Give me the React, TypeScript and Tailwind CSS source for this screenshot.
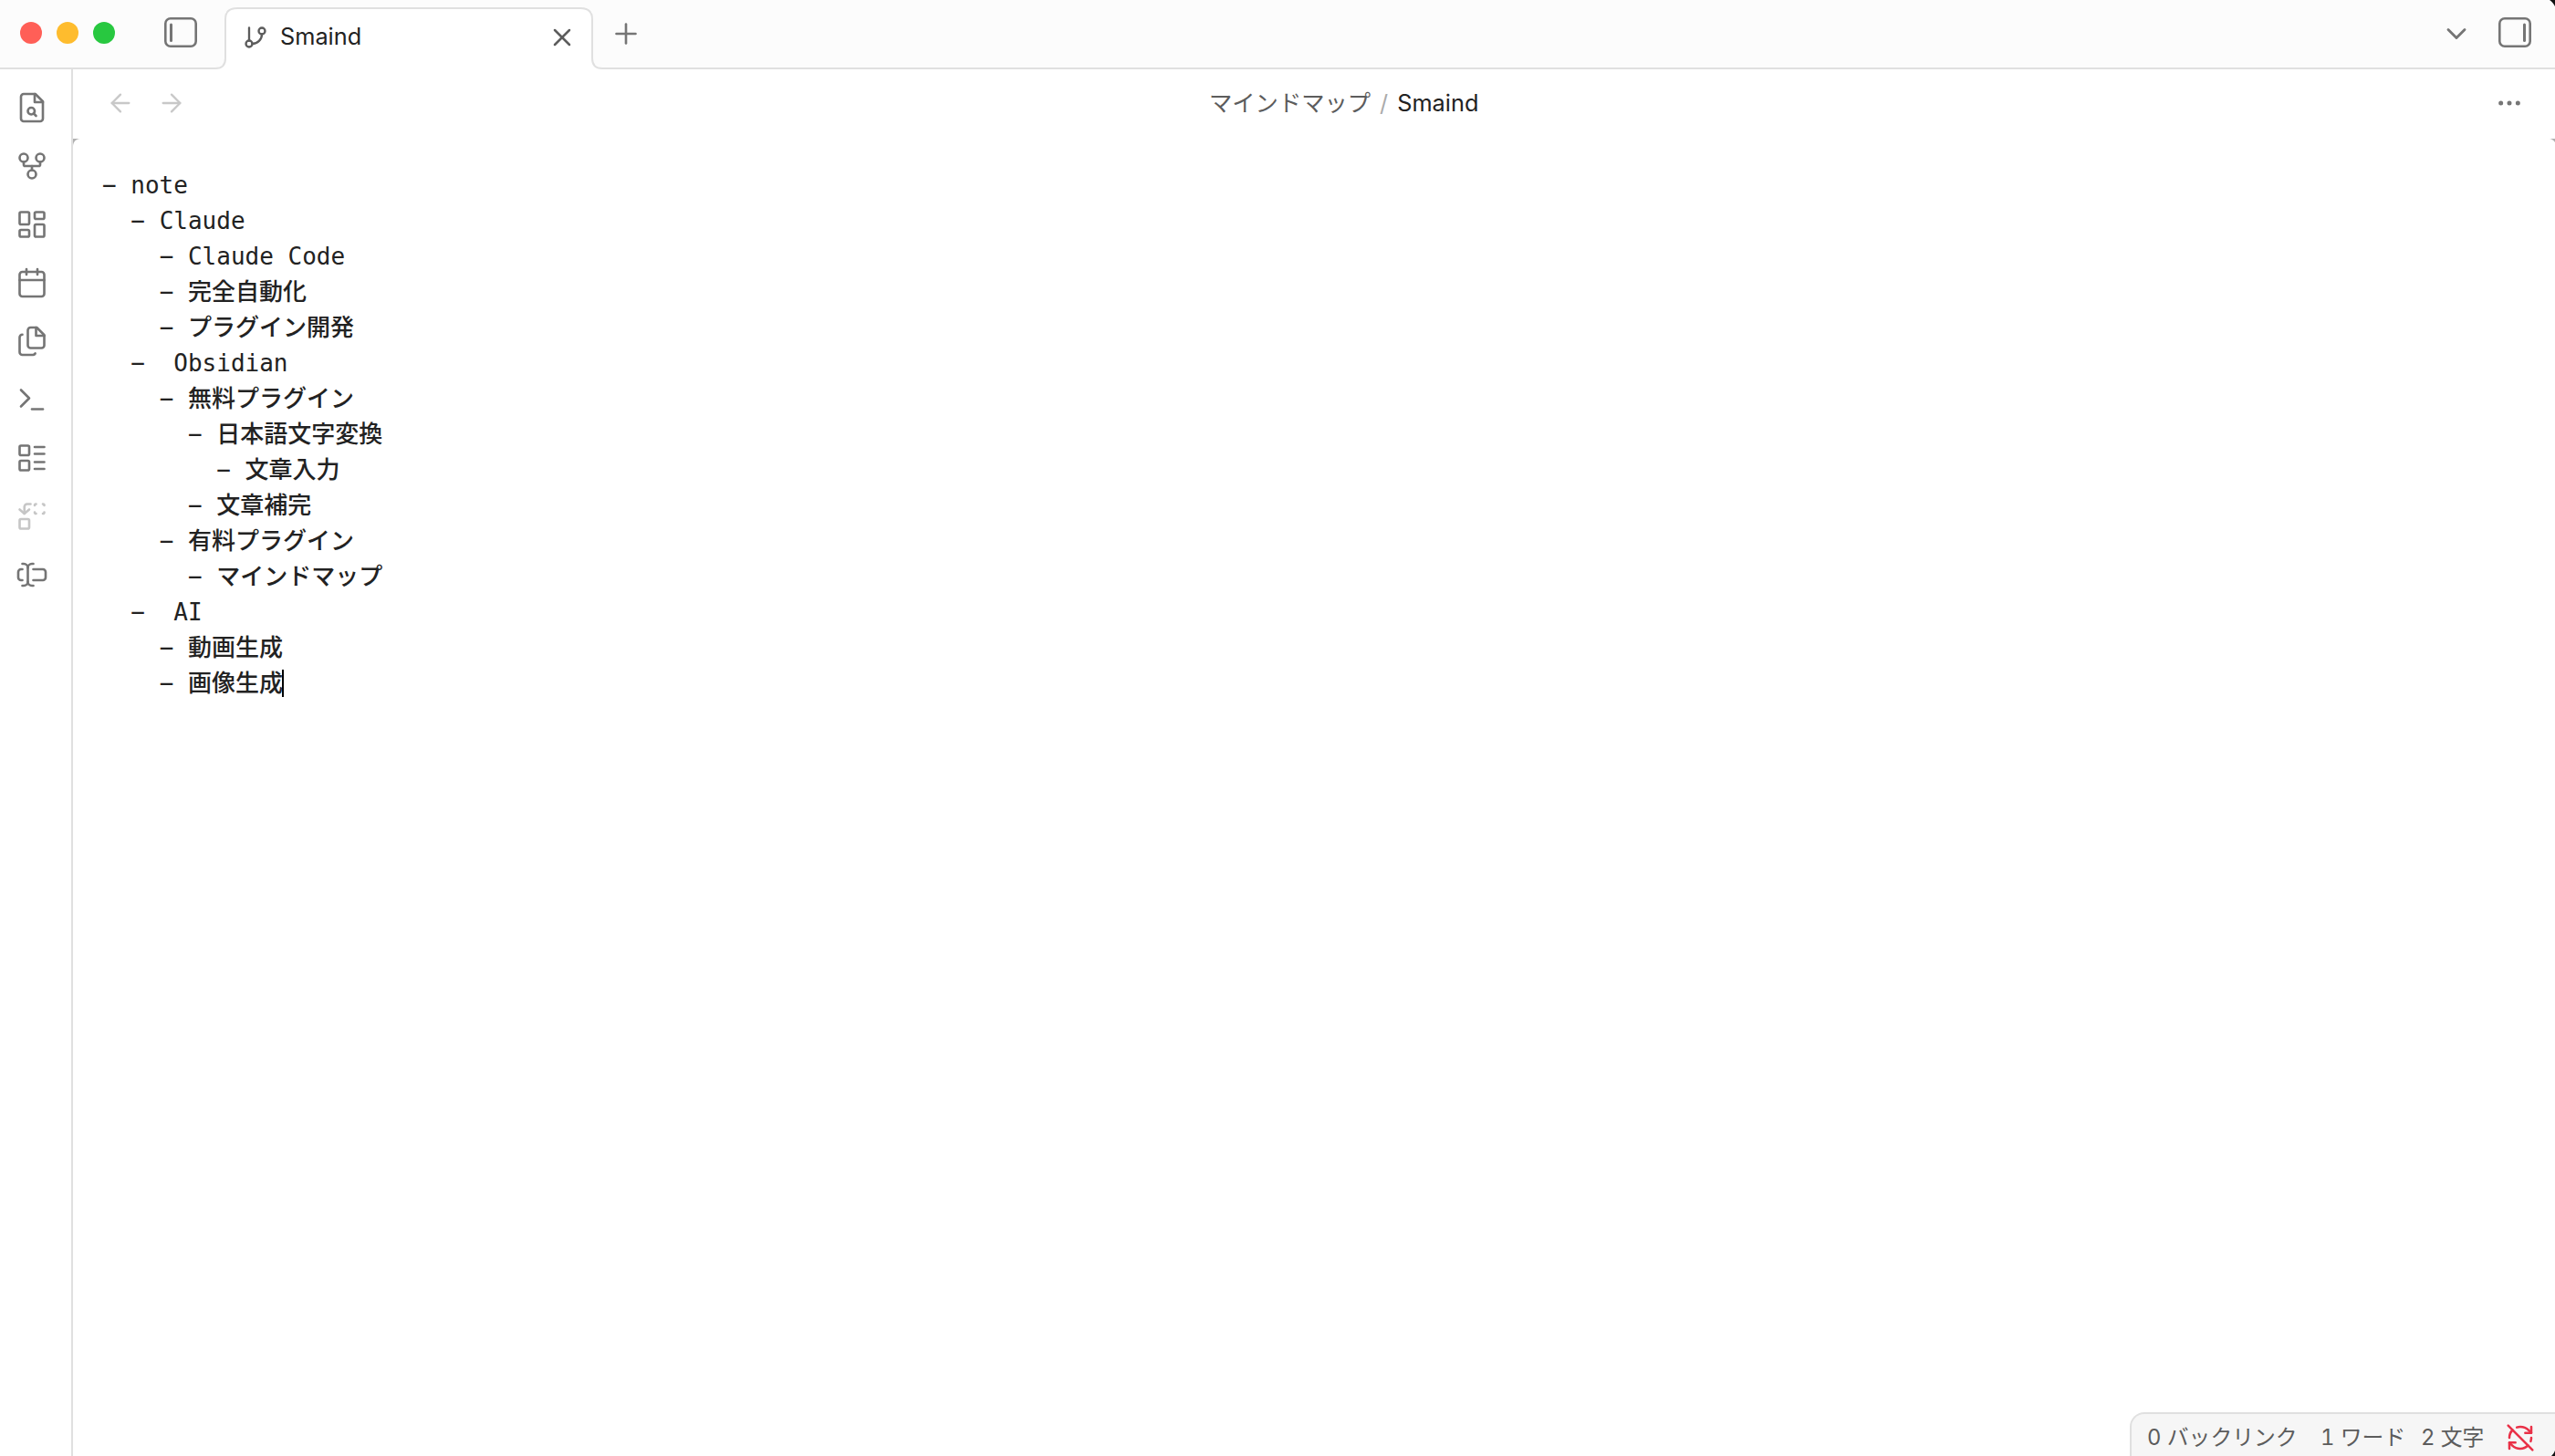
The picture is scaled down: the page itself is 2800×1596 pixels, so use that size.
import * as React from 'react'
import { ArrowLeft, ArrowRight, ChevronDown, Ellipsis, Plus, RefreshCwOff, X } from 'lucide-react'

const lines = [
  { level: 0, text: 'note' },
  { level: 1, text: 'Claude' },
  { level: 2, text: 'Claude Code' },
  { level: 2, text: '完全自動化' },
  { level: 2, text: 'プラグイン開発' },
  { level: 1, text: ' Obsidian' },
  { level: 2, text: '無料プラグイン' },
  { level: 3, text: '日本語文字変換' },
  { level: 4, text: '文章入力' },
  { level: 3, text: '文章補完' },
  { level: 2, text: '有料プラグイン' },
  { level: 3, text: 'マインドマップ' },
  { level: 1, text: ' AI' },
  { level: 2, text: '動画生成' },
  { level: 2, text: '画像生成' },
]

const ribbon = [
  {
    name: 'search',
    shapes: (
      <>
        <path d="M14.5 2H6a2 2 0 0 0-2 2v16a2 2 0 0 0 2 2h12a2 2 0 0 0 2-2V7.5L14.5 2z" />
        <path d="M14 2v6h6" />
        <circle cx="11.5" cy="14.5" r="2.5" />
        <path d="M13.25 16.25 15 18" />
      </>
    ),
  },
  {
    name: 'graph',
    shapes: (
      <>
        <circle cx="12" cy="18" r="3" />
        <circle cx="6" cy="6" r="3" />
        <circle cx="18" cy="6" r="3" />
        <path d="M18 9v2c0 .6-.4 1-1 1H7c-.6 0-1-.4-1-1V9" />
        <path d="M12 12v3" />
      </>
    ),
  },
  {
    name: 'canvas',
    shapes: (
      <>
        <rect x="3" y="3" width="7" height="9" rx="1" />
        <rect x="14" y="3" width="7" height="5" rx="1" />
        <rect x="14" y="12" width="7" height="9" rx="1" />
        <rect x="3" y="16" width="7" height="5" rx="1" />
      </>
    ),
  },
  {
    name: 'calendar',
    shapes: (
      <>
        <rect x="3" y="4" width="18" height="18" rx="2" />
        <path d="M16 2v4M8 2v4M3 10h18" />
      </>
    ),
  },
  {
    name: 'templates',
    shapes: (
      <>
        <path d="M15.5 2H11a2 2 0 0 0-2 2v11a2 2 0 0 0 2 2h8a2 2 0 0 0 2-2V7.5L15.5 2z" />
        <path d="M15 2v6h6" />
        <path d="M5 7.2a2 2 0 0 0-2 2V20a2 2 0 0 0 2 2h7.8a2 2 0 0 0 1.6-1" />
      </>
    ),
  },
  {
    name: 'terminal',
    shapes: (
      <>
        <path d="m4 17 6-6-6-6" />
        <path d="M12 19h8" />
      </>
    ),
  },
  {
    name: 'list',
    shapes: (
      <>
        <rect x="3" y="3" width="7" height="7" rx="1" />
        <rect x="3" y="14" width="7" height="7" rx="1" />
        <path d="M14 4h7M14 9h7M14 15h7M14 20h7" />
      </>
    ),
  },
  {
    name: 'replace',
    disabled: true,
    shapes: (
      <>
        <path d="M14 4c0-.5.5-1 1-1M20 3c.5 0 1 .5 1 1M21 9c0 .5-.5 1-1 1M15 10c-.5 0-1-.5-1-1" />
        <path d="m3 7 3.5 3L10 7" />
        <path d="M6.5 10V5a2 2 0 0 1 2-2H11" />
        <rect x="3" y="14" width="7" height="7" rx="1" />
      </>
    ),
  },
  {
    name: 'rename',
    shapes: (
      <>
        <path d="M5 4h1a3 3 0 0 1 3 3 3 3 0 0 1 3-3h1" />
        <path d="M13 20h-1a3 3 0 0 1-3-3 3 3 0 0 1-3 3H5" />
        <path d="M5 16H4a2 2 0 0 1-2-2v-4a2 2 0 0 1 2-2h1" />
        <path d="M13 8h7a2 2 0 0 1 2 2v4a2 2 0 0 1-2 2h-7" />
        <path d="M9 7v10" />
      </>
    ),
  },
]

function PanelIcon({ side }: { side: 'left' | 'right' }) {
  return (
    <svg width="36" height="34" viewBox="0 0 36 34" fill="none" stroke="#757575">
      <rect x="1.3" y="1.3" width="33.4" height="30.4" rx="5.5" strokeWidth="2.6" />
      <path d={side === 'left' ? 'M7.5 8v17.5' : 'M28.5 8v17.5'} strokeWidth="3" strokeLinecap="round" />
    </svg>
  )
}

function TabBar() {
  return (
    <header className="flex h-[76px] shrink-0 bg-[#fcfcfc]">
      <div className="flex w-[236px] shrink-0 items-start border-b-2 border-[#e0e0e0] pl-[22px]">
        <div className="mt-6 flex gap-4">
          <span className="size-6 rounded-full bg-[#ff5f57]" />
          <span className="size-6 rounded-full bg-[#febc2e]" />
          <span className="size-6 rounded-full bg-[#28c840]" />
        </div>
        <div className="mt-[19px] ml-[54px]">
          <PanelIcon side="left" />
        </div>
      </div>

      <div className="flex h-[76px] shrink-0">
        <svg className="h-[76px] w-3" viewBox="0 0 12 76" fill="none">
          <path d="M0 75c7 0 11-4 11-11V21C11 17 11.3 16 12 14V76H0z" fill="white" />
          <path d="M0 75c7 0 11-4 11-11V21c0-3 .4-5 1-6.500" stroke="#e0e0e0" strokeWidth="2" />
        </svg>
        <div className="flex h-full w-[400px] pt-2">
          <svg className="h-[68px] w-3 shrink-0" viewBox="0 0 12 68" fill="none">
            <path d="M-1 68V13C-1 5 4 1 12 1v67z" fill="white" />
            <path d="M-1 13C-1 5 4 1 12 1" stroke="#e0e0e0" strokeWidth="2" />
          </svg>
          <div className="flex h-[68px] flex-1 items-center border-t-2 border-[#e0e0e0] bg-white pl-1.5">
            <svg width="28" height="28" viewBox="0 0 24 24" fill="none" stroke="#5c5c5c" strokeWidth="2" strokeLinecap="round" className="-mt-1 shrink-0">
              <path d="M6 3v12" />
              <circle cx="18" cy="6" r="3" />
              <circle cx="6" cy="18" r="3" />
              <path d="M18 9a9 9 0 0 1-9 9" />
            </svg>
            <span className="-mt-1.5 ml-[13px] flex-1 text-[25.3px] text-[#222222]">Smaind</span>
            <X size={32} strokeWidth={1.9} className="-mt-1 mr-1 text-[#5c5c5c]" />
          </div>
          <svg className="h-[68px] w-3 shrink-0" viewBox="0 0 12 68" fill="none">
            <path d="M0 1c8 0 13 4 13 12v55H0z" fill="white" />
            <path d="M0 1c8 0 13 4 13 12" stroke="#e0e0e0" strokeWidth="2" />
          </svg>
        </div>
        <svg className="h-[76px] w-3" viewBox="0 0 12 76" fill="none">
          <path d="M12 75C5 75 1 71 1 64V21c0-3-.4-5-1-6.500V76h12z" fill="white" />
          <path d="M12 75C5 75 1 71 1 64V21c0-3-.4-5-1-6.500" stroke="#e0e0e0" strokeWidth="2" />
        </svg>
      </div>

      <div className="flex flex-1 items-start justify-between border-b-2 border-[#e0e0e0] pr-[26px] pl-2">
        <Plus size={36} strokeWidth={1.75} className="mt-[19px] text-[#757575]" />
        <div className="flex">
          <ChevronDown size={36} strokeWidth={1.9} className="mt-[19px] mr-7 text-[#757575]" />
          <div className="mt-[19px]">
            <PanelIcon side="right" />
          </div>
        </div>
      </div>
    </header>
  )
}

function Ribbon() {
  return (
    <nav className="flex w-20 shrink-0 flex-col gap-7 border-r-2 border-[#e0e0e0] pt-6 pl-[17px]">
      {ribbon.map((item) => (
        <svg
          key={item.name}
          width="36"
          height="36"
          viewBox="0 0 24 24"
          fill="none"
          stroke="currentColor"
          strokeWidth="1.75"
          strokeLinecap="round"
          strokeLinejoin="round"
          className={item.disabled ? 'text-[#c6c6c6]' : 'text-[#757575]'}
        >
          {item.shapes}
        </svg>
      ))}
    </nav>
  )
}

function ViewHeader() {
  return (
    <div className="flex h-[76px] shrink-0 items-center pr-[34px] pb-0.5 pl-9 text-[25.3px]">
      <div className="flex w-[1209px] gap-6 text-[#c8c8c8]">
        <ArrowLeft size={32} strokeWidth={1.75} />
        <ArrowRight size={32} strokeWidth={1.75} />
      </div>
      <div className="flex items-center pb-px whitespace-pre">
        <span className="text-[#5c5c5c]">マインドマップ</span>
        <span className="mx-2.5 text-[#ababab]">/</span>
        <span className="text-[#222222]">Smaind</span>
      </div>
      <div className="flex flex-1 justify-end text-[#757575]">
        <Ellipsis size={32} strokeWidth={1.75} />
      </div>
    </div>
  )
}

function Editor() {
  return (
    <div className="relative flex-1 pt-8 pl-8 font-['DejaVu_Sans_Mono','Noto_Sans_CJK_JP',monospace] text-[26px] leading-[39px] font-medium text-[#222222]">
      <svg className="absolute top-0 left-0" width="8" height="8" viewBox="0 0 8 8">
        <path d="M0 0h8C3 .5 .5 3 0 8z" fill="#b0b0b0" />
      </svg>
      <svg className="absolute top-0 right-0" width="6" height="4" viewBox="0 0 6 4">
        <path d="M0 0h6v4C4.500 2 3 .5 0 0z" fill="#b0b0b0" />
      </svg>
      {lines.map((line, index) => (
        <div key={index} className="flex h-[39px] whitespace-pre">
          <span>{'  '.repeat(line.level)}</span>
          <span>− </span>
          <span>{line.text}</span>
          {index === lines.length - 1 && <span className="mt-1 -ml-px h-[30px] w-0.5 bg-black" />}
        </div>
      ))}
    </div>
  )
}

function StatusBar() {
  return (
    <footer className="absolute right-0 bottom-0 flex h-12 w-[466px] items-center rounded-tl-2xl border-t-2 border-l-2 border-[#e0e0e0] bg-[#f6f6f6] pt-1.5 pl-[17px] text-[23.8px] whitespace-pre text-[#5c5c5c] tabular-nums">
      <span className="w-[190px]">0 バックリンク</span>
      <span className="w-[110px]">1 ワード</span>
      <span className="w-[93px]">2 文字</span>
      <RefreshCwOff size={32} strokeWidth={1.9} className="text-[#e93147]" />
    </footer>
  )
}

export default function App() {
  return (
    <div className="relative flex h-[1596px] w-[2800px] flex-col overflow-hidden bg-white font-['Inter','Noto_Sans_CJK_JP',sans-serif]">
      <TabBar />
      <div className="flex flex-1">
        <Ribbon />
        <main className="flex flex-1 flex-col">
          <ViewHeader />
          <Editor />
        </main>
      </div>
      <StatusBar />
      {/* rounded window corners */}
      <svg className="absolute top-0 right-0" width="6" height="7" viewBox="0 0 6 7">
        <path d="M0 0h6v7C4.500 4 3 2 0 0z" fill="#111" />
      </svg>
      <svg className="absolute right-0 bottom-0" width="4" height="6" viewBox="0 0 4 6">
        <path d="M4 0v6H0C2 4 3 2.500 4 0z" fill="#111" />
      </svg>
    </div>
  )
}
